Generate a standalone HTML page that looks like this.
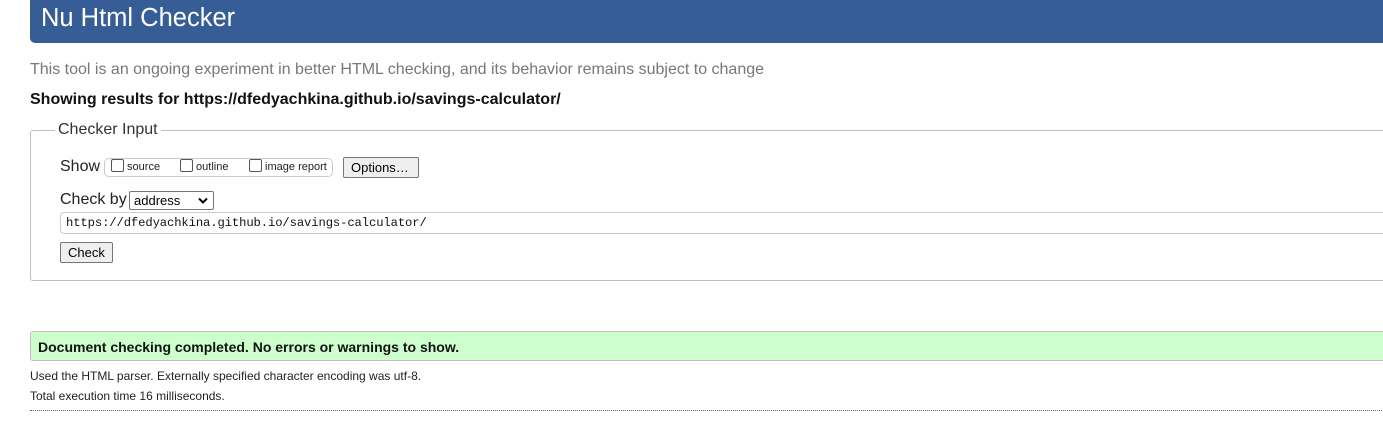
<!DOCTYPE html>
<html><head><meta charset="utf-8"><style>
*{margin:0;padding:0;box-sizing:border-box}
body{width:1383px;height:438px;background:#fff;font-family:"Liberation Sans",Arial,sans-serif;position:relative;overflow:hidden;color:#111}
.a{position:absolute;white-space:nowrap}
.hdr{left:30px;top:0;width:1360px;height:43px;background:#365d95;border-radius:0 0 0 5px}
.cb{display:inline-block;width:13px;height:13px;border:1px solid #555;border-radius:2px;background:#fff;vertical-align:-2px}
.btn{border:1px solid #767676;background:#efefef;border-radius:2px;font-size:13px;color:#000}
</style></head><body>
<div class="a hdr"></div>
<div class="a" style="left:41px;top:4px;font-size:25.5px;color:#fff">Nu Html Checker</div>
<div class="a" style="left:30px;top:61px;font-size:16px;color:#777">This tool is an ongoing experiment in better HTML checking, and its behavior remains subject to change</div>
<div class="a" style="left:30px;top:91px;font-size:16px;font-weight:bold;color:#111">Showing results for https://dfedyachkina.github.io/savings-calculator/</div>
<div class="a" style="left:30px;top:130px;width:1360px;height:151px;border:1px solid #c0c0c0;border-right:none;border-radius:3px 0 0 3px"></div>
<div class="a" style="left:55px;top:121px;background:#fff;padding:0 3px;font-size:16px;color:#333">Checker Input</div>
<div class="a" style="left:60px;top:158px;font-size:16px;color:#222">Show</div>
<div class="a" style="left:104px;top:158px;width:229px;height:19px;border:1px solid #ccc;border-radius:5px"></div>
<div class="a" style="left:111px;top:159px;font-size:11px;color:#222"><span class="cb"></span> source</div>
<div class="a" style="left:180px;top:159px;font-size:11px;color:#222"><span class="cb"></span> outline</div>
<div class="a" style="left:249px;top:159px;font-size:11px;color:#222"><span class="cb"></span> image report</div>
<div class="a btn" style="left:343px;top:157px;width:76px;height:21px;padding:2px 7px">Options…</div>
<div class="a" style="left:60px;top:191px;font-size:16px;color:#222">Check by</div>
<div class="a" style="left:129px;top:191px;width:85px;height:19px;border:1px solid #767676;border-radius:2px;font-size:13px;padding:1px 4px;color:#000">address<svg style="position:absolute;right:5px;top:5px" width="10" height="7" viewBox="0 0 10 7"><path d="M1 1.5 L5 5.5 L9 1.5" fill="none" stroke="#000" stroke-width="2"/></svg></div>
<div class="a" style="left:60px;top:212px;width:1330px;height:22px;border:1px solid #ccc;border-right:none;border-radius:4px 0 0 4px;font-family:'Liberation Mono','DejaVu Sans Mono',monospace;font-size:12.2px;letter-spacing:-0.1px;padding:3px 5px;color:#111">https://dfedyachkina.github.io/savings-calculator/</div>
<div class="a btn" style="left:60px;top:242px;width:53px;height:21px;padding:2px 7px">Check</div>
<div class="a" style="left:30px;top:331px;width:1360px;height:30px;background:#ccffcc;border:1px solid #c0c0c0;border-right:none;border-radius:3px 0 0 3px"></div>
<div class="a" style="left:38px;top:339px;font-size:14px;font-weight:bold;color:#111">Document checking completed. No errors or warnings to show.</div>
<div class="a" style="left:30px;top:369px;font-size:12px;color:#222">Used the HTML parser. Externally specified character encoding was utf-8.</div>
<div class="a" style="left:30px;top:389px;font-size:12px;color:#222">Total execution time 16 milliseconds.</div>
<div class="a" style="left:30px;top:410px;width:1360px;border-top:1px dotted #666"></div>
</body></html>
